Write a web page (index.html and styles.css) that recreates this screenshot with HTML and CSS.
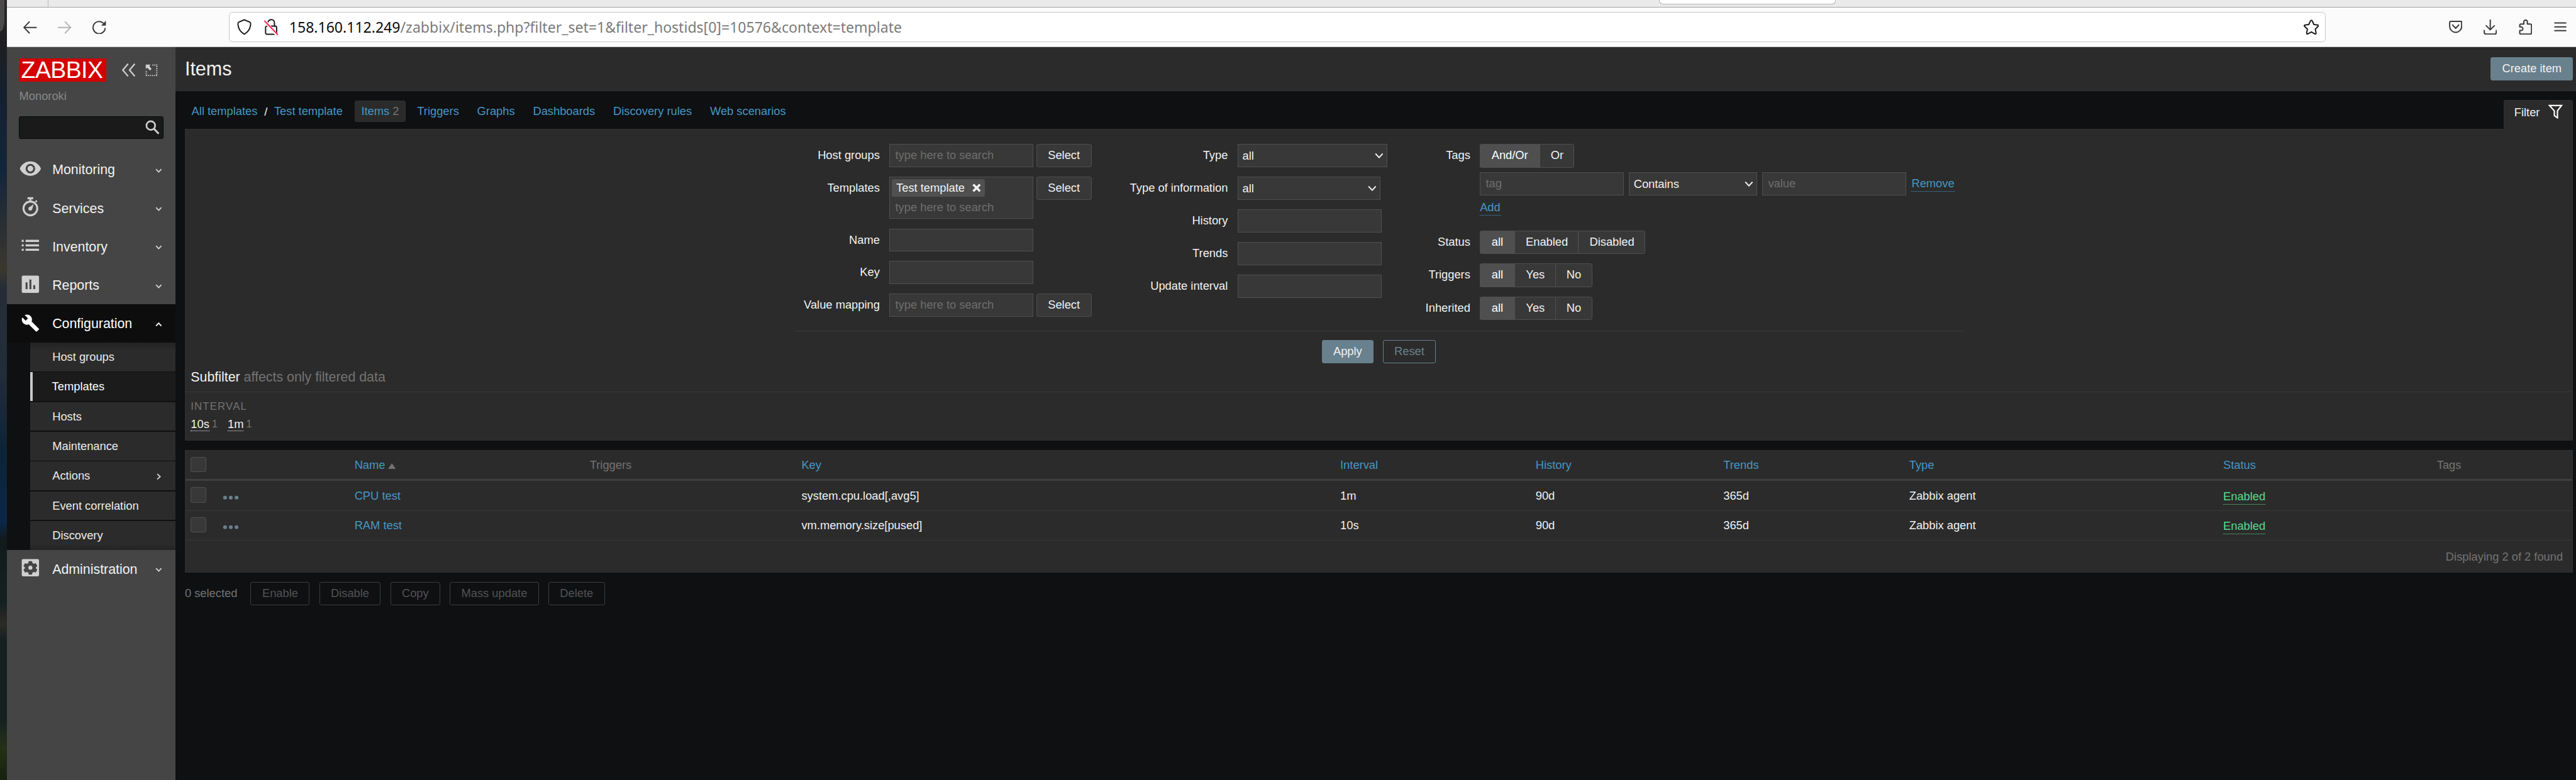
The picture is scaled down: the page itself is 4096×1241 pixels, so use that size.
FILE: index.html
```html
<!DOCTYPE html>
<html lang="en">
<head>
<meta charset="utf-8">
<title>Items</title>
<link rel="stylesheet" href="styles.css">
</head>
<body>
<div class="screen">
  <div class="wallpaper"><div class="dock"></div></div>
  <div class="window">
    <div class="tabstrip"><div class="tab-edge"></div><div class="tab-active"></div></div>
    <div class="toolbar">
      <div class="tools-left">
        <svg class="i28" viewBox="0 0 28 28"><path d="M27 14H2M12.500 2.500L1.500 14l11 11.500" stroke="#3a3a3a"/></svg>
        <svg class="i28" viewBox="0 0 28 28"><path d="M1 14h25M15.500 2.500l11 11.500-11 11.500" stroke="#b4b4b4"/></svg>
        <svg class="i28" viewBox="0 0 28 28"><path d="M26.500 16A12.700 12.700 0 1 1 22 4.500" stroke="#3a3a3a"/><path d="M28 0v10H18z" fill="#3a3a3a" stroke="none"/></svg>
      </div>
      <div class="urlbar">
        <svg class="shield" viewBox="0 0 30 34"><path d="M15 2l12 5c1.500.6 1.500 2 1 6-1 8-5 14.500-13 19C7 27.500 3 21 2 13c-.5-4-.5-5.400 1-6z" stroke="#1a1a1a"/></svg>
        <svg class="lock" viewBox="0 0 30 34"><rect x="3" y="15" width="23" height="17" rx="3" stroke="#1a1a1a"/><path d="M8 6.500C10 2 13 1.500 15 1.500c4 0 6.500 3 6.500 7V15" stroke="#1a1a1a"/><path d="M1.500 5L27 34" stroke="#fff" stroke-width="6"/><path d="M1 4.500L28 32.500" stroke="#ff2453"/></svg>
        <span class="url"><b>158.160.112.249</b>/zabbix/items.php?filter_set=1&amp;filter_hostids[0]=10576&amp;context=template</span>
        <svg class="star" viewBox="0 0 32 32"><path d="M16 1.500c.8 0 1.300.5 1.700 1.300l3.600 7.700 7.600 1c2 .3 2.400 1.700 1.100 3l-5.700 5.500 1.400 8c.3 2-.9 2.700-2.500 1.900L16 26l-7.200 3.900c-1.600.8-2.800.1-2.500-1.900l1.400-8L2 14.500c-1.300-1.300-.9-2.700 1.100-3l7.600-1 3.600-7.700c.4-.8.900-1.300 1.700-1.300z" stroke="#1a1a1a"/></svg>
      </div>
      <div class="tools-right">
        <svg class="i28" viewBox="0 0 28 28"><path d="M3.500 2.500h21q2 0 2 2V13a12.500 12.500 0 0 1-25 0V4.500q0-2 2-2zM7.500 10l6.500 7 6.500-7" stroke="#3a3a3a"/></svg>
        <svg class="i28 tall" viewBox="0 0 28 32"><path d="M14 1v20M5.500 13l8.500 8.500 8.500-8.500M1.500 23v4q0 3.500 3.500 3.500h18q3.500 0 3.500-3.500v-4" stroke="#3a3a3a"/></svg>
        <svg class="i28 tall" viewBox="0 0 28 32"><path d="M5 9.500h5.500V5a3.700 3.700 0 0 1 7.400 0v4.500H24q2.500 0 2.500 2.500v16q0 2.500-2.500 2.500H4q-2 0-2-2.500v-5h4a4 4 0 0 0 0-7.500H2V12q0-2.500 3-2.500z" stroke="#3a3a3a"/></svg>
        <svg class="i28" viewBox="0 0 28 28"><path d="M3 6h23M3 14h23M3 22h23" stroke="#3a3a3a"/></svg>
      </div>
    </div>

    <div class="app">
      <aside class="sidebar">
        <div class="brand">
          <span class="logo">ZABBIX</span>
          <svg class="collapse" viewBox="0 0 30 30"><path d="M14 2L3 15l11 13M28 2L17 15l11 13"/></svg>
          <svg class="compact" viewBox="0 0 26 26"><path d="M15 2h10M24 4v21M24 24H1M2 24V12" stroke-dasharray="2 2" stroke-width="2.500"/><path d="M1 1h10L8.500 3.800l4.500 6.500-3 3L4 7.500 1 10z" fill="#d0d0d0" stroke="none"/></svg>
        </div>
        <div class="server">Monoroki</div>
        <div class="search"><svg viewBox="0 0 30 30"><circle cx="11.500" cy="11.500" r="9" stroke-width="3.500"/><path d="M18 18l10 10.500" stroke-width="4"/></svg></div>
        <nav class="menu">
          <a class="item"><svg class="mi" viewBox="0 0 24 24"><path d="M12 4.500C7 4.500 2.700 7.600 1 12c1.700 4.400 6 7.500 11 7.500s9.300-3.100 11-7.500c-1.700-4.400-6-7.500-11-7.500zM12 17a5 5 0 1 1 0-10 5 5 0 0 1 0 10zm0-8a3 3 0 1 0 0 6 3 3 0 0 0 0-6z"/></svg><span>Monitoring</span><svg class="chev" viewBox="0 0 14 14"><path d="M1.500 4L7 10l5.500-6"/></svg></a>
          <a class="item"><svg class="mi" viewBox="0 0 24 24"><path d="M9 1.800h6v2.200h-2v1.200h-2V4H9zM18 4.800l1.300 1.300-1.200 1.300-1.300-1.300z"/><circle class="ring" cx="12" cy="13.500" r="7.200"/><path d="M15.500 9l-1.600 5.200a2 2 0 1 1-2.300-2.400z"/></svg><span>Services</span><svg class="chev" viewBox="0 0 14 14"><path d="M1.500 4L7 10l5.500-6"/></svg></a>
          <a class="item"><svg class="mi" viewBox="0 0 24 24"><path d="M3 6.300h2v2.200H3zM3 10.900h2v2.200H3zM3 15.500h2v2.200H3zM7 6.300h14v2.200H7zM7 10.900h14v2.200H7zM7 15.500h14v2.200H7z"/></svg><span>Inventory</span><svg class="chev" viewBox="0 0 14 14"><path d="M1.500 4L7 10l5.500-6"/></svg></a>
          <a class="item"><svg class="mi" viewBox="0 0 24 24"><path fill-rule="evenodd" d="M4.500 3h15A1.500 1.500 0 0 1 21 4.500v15a1.500 1.500 0 0 1-1.500 1.500h-15A1.500 1.500 0 0 1 3 19.500v-15A1.500 1.500 0 0 1 4.500 3zM7 10v7h2v-7zm4-3v10h2V7zm4 6v4h2v-4z"/></svg><span>Reports</span><svg class="chev" viewBox="0 0 14 14"><path d="M1.500 4L7 10l5.500-6"/></svg></a>
          <a class="item open"><svg class="mi" viewBox="0 0 24 24"><path d="M20.700 18.200l-7.400-7.400c.8-1.900.3-4.200-1.200-5.700-1.700-1.700-4.100-2-6.100-1l3.500 3.500L7.100 10 3.600 6.500c-1 2-.6 4.400 1 6.100 1.500 1.500 3.800 2 5.700 1.200l7.400 7.400c.3.3.8.3 1.100 0l1.900-1.900c.4-.3.4-.8 0-1.100z"/></svg><span>Configuration</span><svg class="chev" viewBox="0 0 14 14"><path d="M1.500 10L7 4l5.500 6"/></svg></a>
          <div class="submenu">
            <a>Host groups</a>
            <a class="current">Templates</a>
            <a>Hosts</a>
            <a>Maintenance</a>
            <a>Actions<svg class="chev" viewBox="0 0 14 14"><path d="M4 1.500L10 7l-6 5.500"/></svg></a>
            <a>Event correlation</a>
            <a>Discovery</a>
          </div>
          <a class="item"><svg class="mi" viewBox="0 0 24 24"><path fill-rule="evenodd" d="M4.500 3h15A1.500 1.500 0 0 1 21 4.500v15a1.500 1.500 0 0 1-1.500 1.500h-15A1.500 1.500 0 0 1 3 19.500v-15A1.500 1.500 0 0 1 4.500 3zM10.300 5l-.5 2.100-1.300.8-2-.7-1.800 3 1.500 1.300v1.200l-1.500 1.300 1.800 3 2-.7 1.300.8.500 2.100h3.400l.5-2.100 1.300-.8 2 .7 1.800-3-1.500-1.300v-1.200l1.500-1.300-1.800-3-2 .7-1.300-.8L13.700 5z"/><circle cx="12" cy="12" r="2.100"/></svg><span>Administration</span><svg class="chev" viewBox="0 0 14 14"><path d="M1.500 4L7 10l5.500-6"/></svg></a>
        </nav>
      </aside>

      <main class="page">
        <header class="page-head"><h1>Items</h1><button class="btn primary">Create item</button></header>
        <div class="tabs">
          <nav class="crumbs">
            <a>All templates</a><i>/</i><a>Test template</a>
            <a class="sel">Items <em>2</em></a>
            <a class="t">Triggers</a><a class="t">Graphs</a><a class="t">Dashboards</a><a class="t">Discovery rules</a><a class="t">Web scenarios</a>
          </nav>
          <div class="filter-tab">Filter<svg viewBox="0 0 30 30"><path d="M2.500 2.500h25L19 13.500V28l-6.500-4.500v-10z"/></svg></div>
        </div>

        <section class="filter">
          <div class="form">
            <div class="col c1">
              <label>Host groups</label><div class="f"><div class="input ph">type here to search</div><button class="btn">Select</button></div>
              <label>Templates</label><div class="f"><div class="multi"><span class="chip">Test template<svg viewBox="0 0 18 18"><path d="M2 2l14 14M16 2L2 16"/></svg></span><span class="ph">type here to search</span></div><button class="btn">Select</button></div>
              <label>Name</label><div class="f"><div class="input"></div></div>
              <label>Key</label><div class="f"><div class="input"></div></div>
              <label>Value mapping</label><div class="f"><div class="input ph">type here to search</div><button class="btn">Select</button></div>
            </div>
            <div class="col c2">
              <label>Type</label><div class="f"><div class="select w312">all<svg viewBox="0 0 18 12"><path d="M1.500 2L9 10l7.500-8"/></svg></div></div>
              <label>Type of information</label><div class="f"><div class="select w298">all<svg viewBox="0 0 18 12"><path d="M1.500 2L9 10l7.500-8"/></svg></div></div>
              <label>History</label><div class="f"><div class="input"></div></div>
              <label>Trends</label><div class="f"><div class="input"></div></div>
              <label>Update interval</label><div class="f"><div class="input"></div></div>
            </div>
            <div class="col c3">
              <label>Tags</label>
              <div class="tags">
                <div class="seg"><span class="on w124">And/Or</span><span class="w72">Or</span></div>
                <div class="tagrow"><div class="input ph">tag</div><div class="select w268">Contains<svg viewBox="0 0 18 12"><path d="M1.500 2L9 10l7.500-8"/></svg></div><div class="input ph">value</div><a class="dot">Remove</a></div>
                <a class="dot add">Add</a>
              </div>
              <label>Status</label><div class="seg"><span class="on w72">all</span><span class="w133">Enabled</span><span class="w140">Disabled</span></div>
              <label>Triggers</label><div class="seg"><span class="on w72">all</span><span class="w85">Yes</span><span class="w77">No</span></div>
              <label>Inherited</label><div class="seg"><span class="on w72">all</span><span class="w85">Yes</span><span class="w77">No</span></div>
            </div>
          </div>
          <div class="actions"><button class="btn primary w108">Apply</button><button class="btn alt w109">Reset</button></div>
          <h3>Subfilter <em>affects only filtered data</em></h3>
          <div class="sub">
            <h4>INTERVAL</h4>
            <p><a class="dot">10s</a><em>1</em><a class="dot second">1m</a><em>1</em></p>
          </div>
        </section>

        <section class="list">
          <div class="row head"><i class="check"></i><span></span><a>Name<svg class="sort" viewBox="0 0 16 12"><path d="M8 0l8 12H0z"/></svg></a><span class="g">Triggers</span><a>Key</a><a>Interval</a><a>History</a><a>Trends</a><a>Type</a><a>Status</a><span class="g">Tags</span></div>
          <div class="row"><i class="check"></i><svg class="dots" viewBox="0 0 34 10"><circle cx="5" cy="5" r="4"/><circle cx="17" cy="5" r="4"/><circle cx="29" cy="5" r="4"/></svg><a>CPU test</a><span></span><span>system.cpu.load[,avg5]</span><span>1m</span><span>90d</span><span>365d</span><span>Zabbix agent</span><span><a class="dot ok">Enabled</a></span><span></span></div>
          <div class="row"><i class="check"></i><svg class="dots" viewBox="0 0 34 10"><circle cx="5" cy="5" r="4"/><circle cx="17" cy="5" r="4"/><circle cx="29" cy="5" r="4"/></svg><a>RAM test</a><span></span><span>vm.memory.size[pused]</span><span>10s</span><span>90d</span><span>365d</span><span>Zabbix agent</span><span><a class="dot ok">Enabled</a></span><span></span></div>
          <div class="total">Displaying 2 of 2 found</div>
        </section>

        <footer class="bulk"><span>0 selected</span><button class="btn off w123">Enable</button><button class="btn off w128">Disable</button><button class="btn off w104">Copy</button><button class="btn off w185">Mass update</button><button class="btn off w118">Delete</button></footer>
      </main>
    </div>
  </div>
</div>
</body>
</html>
```
FILE: styles.css
```css
* { box-sizing: border-box; }
html, body { margin: 0; height: 100%; overflow: hidden; background: #0e1012; }
h1, h3, h4, p { margin: 0; font-weight: 400; }
em, i { font-style: normal; }
button { font: inherit; padding: 0; }
svg { display: block; flex: none; fill: none; }

/* The interface is laid out in 2x pixels and scaled down as a whole. */
.screen {
  zoom: 0.76347;
  width: 5365px;
  height: 1626px;
  display: flex;
  overflow: hidden;
  font: 24px/30px "Liberation Sans", Arial, sans-serif;
  color: #f2f2f2;
}
.wallpaper {
  flex: none;
  width: 15px;
  background: linear-gradient(#2b2826 0, #201f22 5%, #13202e 12%, #14253a 22%, #3b372e 34.500%, #262d38 37%, #222c3a 48%, #0d2436 58%, #0b2749 67%, #121a1c 69%, #14201f 77%, #2b2a28 80%, #14201f 82%, #142020 92%, #243016 96%, #16210e 100%);
}
.dock { width: 9px; height: 65px; background: #4b4a4a; border-bottom-right-radius: 9px 24px; }
.window { flex: 1; display: flex; flex-direction: column; }

/* browser chrome */
.tabstrip { display: flex; flex: none; height: 16px; background: #eaeaea; border-bottom: 2px solid #a3a3a3; }
.tab-edge { width: 86px; border-right: 2px solid #b8b8b8; }
.tab-active { width: 368px; height: 9px; margin-left: 3354px; background: #fff; border: 2px solid #b4b4b4; border-top: 0; border-radius: 0 0 8px 8px; }
.toolbar { display: flex; flex: none; height: 82px; align-items: center; background: #fbfbfb; border-bottom: 2px solid #c4c4c4; }
.toolbar svg { stroke-width: 2.6; stroke-linejoin: round; stroke-linecap: round; }
.tools-left { display: flex; gap: 44px; width: 462px; padding-left: 34px; padding-top: 2px; }
.i28 { width: 28px; height: 28px; }
.i28.tall { height: 32px; }
.urlbar { display: flex; align-items: center; width: 4367px; height: 64px; padding-left: 16px; background: #fff; border: 2px solid #c6c6c6; border-radius: 8px; }
.shield { width: 30px; height: 34px; }
.lock { width: 30px; height: 34px; margin-left: 26px; }
.star { width: 32px; height: 32px; margin-left: auto; margin-right: 13px; }
.url { margin-left: 22px; font: 30.2px/40px "Noto Sans", "Open Sans", sans-serif; color: #7b7b7b; white-space: nowrap; }
.url b { font-weight: 400; color: #0c0c0d; }
.tools-right { display: flex; align-items: center; gap: 44.600px; margin-left: 256px; }

/* sidebar */
.app { flex: 1; display: flex; min-height: 0; }
.sidebar { flex: none; width: 350px; background: #454545; }
.sidebar svg { stroke: #d0d0d0; }
.brand { display: flex; align-items: center; padding: 24px 0 0 24px; }
.logo { width: 182px; height: 48px; padding-left: 5px; background: #d40000; color: #fff; font-size: 49px; line-height: 49px; letter-spacing: -0.700px; }
.collapse { width: 30px; height: 30px; margin-left: 32px; stroke-width: 3; }
.compact { width: 26px; height: 26px; margin-left: 20px; }
.server { margin: 16px 0 0 25px; color: #87898a; }
.search { display: flex; justify-content: flex-end; align-items: center; width: 302px; height: 48px; margin: 26px 0 0 24px; padding-right: 7px; background: #1a1a1a; border: 2px solid #000a10; border-radius: 4px; }
.search svg { width: 30px; height: 30px; margin-bottom: 2px; }
.menu { margin-top: 24px; }
.item { display: flex; align-items: center; height: 80px; padding: 0 27px 0 24px; font-size: 28px; }
.item .mi { width: 48px; height: 48px; margin: -4px 22px 0 0; fill: #d0d0d0; stroke: none; }
.item .ring { fill: none; stroke: #d0d0d0; stroke-width: 2; }
.item span { padding-top: 2px; }
.item .chev { margin-left: auto; margin-top: 4px; }
.chev { width: 14px; height: 14px; stroke-width: 2.400; }
.open { background: #0d0d0d; color: #fff; }
.open .mi { fill: #fff; }
.open .chev { stroke: #fff; }
.submenu { display: flex; flex-direction: column; gap: 2px; height: 432px; padding-left: 48px; background: linear-gradient(90deg, #0e1012 48px, #0e0f10 48px); }
.submenu a { display: flex; align-items: center; justify-content: space-between; height: 60px; padding: 2px 27px 0 46px; background: #2b2b2b; color: #ebebeb; }
.submenu a:first-child { background: linear-gradient(#222 0, #2b2b2b 16px); }
.submenu a:last-child { background: linear-gradient(#2b2b2b 48px, #242424); }
.submenu .current { background: #1b1b1b; border-left: 6px solid #c8c8c8; padding-left: 40px; color: #fff; }

/* page */
.page { flex: 1; display: flex; flex-direction: column; background: #0e1012; }
.page-head { display: flex; align-items: center; justify-content: space-between; flex: none; height: 92px; padding: 0 6px 0 20px; background: #2b2b2b; border-bottom: 2px solid #303030; }
h1 { font-size: 40px; line-height: 48px; padding-top: 1px; }
.btn { height: 48px; width: 115px; color: #f2f2f2; background: #383838; border: 2px solid #4f4f4f; border-radius: 4px; white-space: nowrap; }
.btn.primary { background: #69808d; border-color: #69808d; }
.page-head .btn { width: 172px; }
.btn.alt { background: none; border-color: #69808d; color: #69808d; }
.btn.off { background: none; border-color: #3d3d3d; color: #525252; }
.page a { color: #4796c4; }
.tabs { display: flex; justify-content: space-between; flex: none; height: 78px; padding: 0 6px 0 34px; }
.crumbs { display: flex; align-items: center; height: 44px; margin-top: 20px; white-space: nowrap; }
.crumbs i { margin: 4px 14px 0; }
.crumbs .sel { height: 45px; line-height: 41px; margin: 0 24px 0 25px; padding: 0 12.500px; background: #2b2b2b; border: 2px solid #303030; border-radius: 4px; }
.crumbs .t { margin-right: 37.700px; }
em { color: #737373; }
.filter-tab { display: flex; align-items: flex-start; width: 145px; height: 62px; margin-top: 18px; padding: 11px 0 0 21px; background: #2b2b2b; border: 2px solid #303030; border-bottom: 0; border-radius: 4px 4px 0 0; line-height: 30px; position: relative; z-index: 1; }
.filter-tab svg { width: 30px; height: 30px; margin: -3px 0 0 18px; stroke: #fff; stroke-width: 2.800; }
.filter { flex: none; height: 650px; margin: 0 6px 0 20px; background: #2b2b2b; border: 2px solid #303030; }
.form { display: flex; align-items: flex-start; width: 2436px; height: 390px; margin: 31px 0 0 1268px; border-bottom: 2px solid #383838; }
.col { display: grid; gap: 20px; align-items: start; }
.col label { text-align: right; line-height: 48px; white-space: nowrap; }
.c1 { grid-template-columns: 178px 421px; margin-right: 34px; }
.c2 { grid-template-columns: 250px 312px; margin-right: 51px; }
.c3 { grid-template-columns: 122px auto; }
.f { display: flex; gap: 6px; align-items: flex-start; }
.input, .select, .multi { flex: none; width: 300px; height: 48px; background: #383838; border: 2px solid #4f4f4f; line-height: 44px; white-space: nowrap; }
.ph { color: #6e6e6e; padding-left: 11px; }
.multi { height: 88px; padding: 4px; display: flex; flex-direction: column; align-items: flex-start; }
.multi .ph { line-height: 44px; padding-left: 7px; }
.chip { display: flex; align-items: center; justify-content: space-between; width: 193px; height: 36px; padding: 0 8px 0 9px; background: #505050; border-radius: 4px; }
.chip svg { width: 18px; height: 18px; stroke: #f2f2f2; stroke-width: 4.500; }
.select { display: flex; align-items: center; justify-content: space-between; padding: 0 7px 0 9px; }
.select svg { width: 18px; height: 12px; stroke: #f2f2f2; stroke-width: 2.500; }
.seg { display: flex; height: 49px; width: max-content; background: #383838; border: 2px solid #4f4f4f; border-radius: 4px; line-height: 45px; text-align: center; }
.seg span + span { border-left: 2px solid #4f4f4f; margin-right: -1px; }
.seg .on { background: #4f4f4f; color: #fff; margin-left: -1px; margin-right: 0; }
.tags { height: 160px; }
.tagrow { display: flex; gap: 10px; margin-top: 10px; }
.tagrow .dot { margin-top: 9px; margin-left: 1px; }
.dot { display: inline-block; height: 31px; line-height: 28px; border-bottom: 2px dotted; }
.add { margin-top: 11px; }
.actions { display: flex; justify-content: center; gap: 20px; width: 4970px; padding-top: 19px; }
h3 { height: 60px; padding: 8px 0 0 11px; font-size: 28px; line-height: 44px; border-bottom: 2px solid #383838; }
.sub { padding: 15px 11px 0; }
h4 { font-size: 22px; line-height: 30px; letter-spacing: 1.500px; color: #737373; padding-top: 1px; }
.sub p { display: flex; align-items: flex-start; margin-top: 6px; }
.sub .dot, .ok.dot { height: 30px; }
.sub .dot { color: #f2f2f2; }
.sub em { font-size: 22px; line-height: 30px; margin-left: 5px; }
.sub .second { margin-left: 21px; }

.list { flex: none; height: 255px; margin: 20px 6px 0 20px; background: #2b2b2b; border: 2px solid #303030; }
.row { display: grid; grid-template-columns: 67px 274px 490px 441px 1122px 407px 391px 387px 654px 445px auto; align-items: center; height: 62px; padding-left: 11px; border-bottom: 2px solid #383838; }
.row.head { height: 63px; border-bottom: 4px solid #404040; }
.row > * { padding-top: 2px; }
.row .check { width: 32px; height: 32px; margin-bottom: 2px; background: #383838; border: 2px solid #4f4f4f; border-radius: 4px; }
.row .g { color: #737373; }
.sort { display: inline-block; width: 16px; height: 12px; margin-left: 6px; fill: #737373; }
.row .dots { width: 34px; height: 10px; padding: 0; margin-top: 9px; fill: #69808d; }
.page .ok { color: #59db8f; margin-top: 6px; line-height: 26px; }
.total { height: 64px; padding-right: 20px; line-height: 67px; text-align: right; color: #737373; }
.bulk { display: flex; align-items: center; gap: 20px; margin: 20px 0 0 20px; color: #737373; }
.bulk span { width: 117px; padding-top: 1px; white-space: nowrap; }

.w72 { width: 72px; } .w77 { width: 77px; } .w85 { width: 85px; } .w124 { width: 124px; }
.w133 { width: 133px; } .w140 { width: 140px; }
.select.w268 { width: 268px; } .select.w298 { width: 298px; } .select.w312 { width: 312px; }
.btn.w104 { width: 104px; } .btn.w108 { width: 108px; } .btn.w109 { width: 109px; } .btn.w118 { width: 118px; }
.btn.w123 { width: 123px; } .btn.w128 { width: 128px; } .btn.w185 { width: 185px; }
```
